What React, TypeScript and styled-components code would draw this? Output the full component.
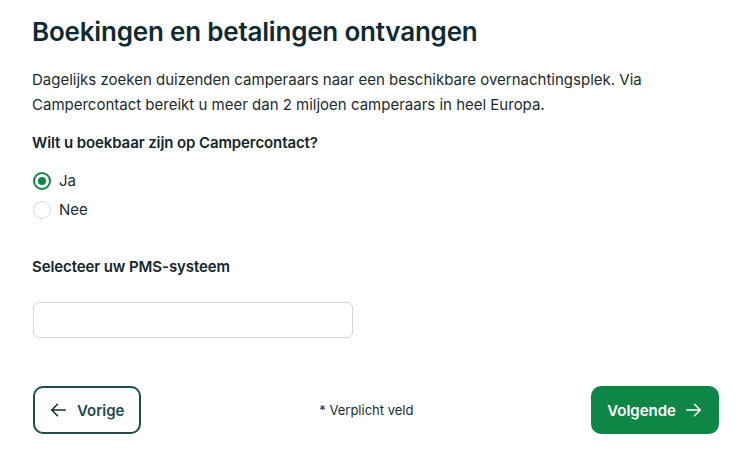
import { FC } from "react";
import styled, { createGlobalStyle } from "styled-components";

const GlobalStyle = createGlobalStyle`
  * { box-sizing: border-box; }
  body {
    margin: 0;
    background: #fff;
    font-family: Inter, "Liberation Sans", sans-serif;
    color: #14262b;
  }
`;

const Page = styled.div`
  width: 742px;
  padding: 14px 23px 0 32px;
`;

const Title = styled.h1`
  font-size: 26px;
  font-weight: 600;
  line-height: 36px;
  margin: 0 0 17px;
  color: #0f2a30;
  letter-spacing: -0.2px;
`;

const Intro = styled.p`
  font-size: 15px;
  line-height: 25px;
  margin: 0 0 16px;
  color: #1a2b2f;
`;

const Question = styled.h3`
  font-size: 15px;
  font-weight: 600;
  line-height: 20px;
  margin: 0 0 19px;
  color: #14262b;
  letter-spacing: -0.1px;
`;

const Options = styled.div`
  display: flex;
  flex-direction: column;
  gap: 11px;
  margin-bottom: 38px;
`;

const Option = styled.label`
  display: flex;
  align-items: center;
  gap: 8px;
  font-size: 15px;
  line-height: 18px;
  color: #1a2b2f;
`;

const Radio = styled.span<{ $checked?: boolean }>`
  width: 18px;
  height: 18px;
  border-radius: 50%;
  border: ${(p) => (p.$checked ? "2px solid #0e8746" : "1px solid #d7dae0")};
  display: flex;
  align-items: center;
  justify-content: center;
  margin-left: 1px;

  &::after {
    content: "";
    width: 8px;
    height: 8px;
    border-radius: 50%;
    background: #0e8746;
    display: ${(p) => (p.$checked ? "block" : "none")};
  }
`;

const FieldLabel = styled.h3`
  font-size: 15px;
  font-weight: 600;
  line-height: 20px;
  margin: 0 0 25px;
  color: #14262b;
  letter-spacing: -0.1px;
`;

const Input = styled.input`
  display: block;
  width: 320px;
  height: 36px;
  border: 1px solid #d3d6dd;
  border-radius: 6px;
  margin: 0 0 1px 1px;
  font-family: inherit;
  font-size: 15px;
  padding: 0 12px;
  outline: none;
`;

const Footer = styled.div`
  display: flex;
  align-items: center;
  justify-content: space-between;
  margin-top: 48px;
`;

const Button = styled.button<{ $primary?: boolean }>`
  display: flex;
  align-items: center;
  gap: ${(p) => (p.$primary ? "10px" : "11px")};
  height: 48px;
  padding: ${(p) => (p.$primary ? "0 16px 0 14px" : "0 15px 0 16px")};
  border-radius: 10px;
  font-family: inherit;
  font-size: 15px;
  font-weight: 600;
  cursor: pointer;
  border: 2px solid ${(p) => (p.$primary ? "#0e8746" : "#1f4a50")};
  background: ${(p) => (p.$primary ? "#0e8746" : "#fff")};
  color: ${(p) => (p.$primary ? "#fff" : "#1f4a50")};
  margin-left: ${(p) => (p.$primary ? "0" : "1px")};

  svg {
    color: ${(p) => (p.$primary ? "#fff" : "#1a2b2f")};
  }
`;

const Required = styled.span`
  font-size: 13px;
  color: #1a2b2f;
`;

const Arrow: FC<{ dir: "left" | "right" }> = ({ dir }) => (
  <svg width="15" height="14" viewBox="0 0 15 14" fill="none" stroke="currentColor" strokeWidth="1.5" strokeLinecap="round" strokeLinejoin="round">
    {dir === "left" ? (
      <>
        <path d="M14.2 7H0.8" />
        <path d="M6.5 1.2L0.8 7l5.7 5.8" />
      </>
    ) : (
      <>
        <path d="M0.8 7h13.4" />
        <path d="M8.5 1.2L14.2 7l-5.7 5.8" />
      </>
    )}
  </svg>
);

const App: FC = () => {
  return (
    <>
      <GlobalStyle />
      <Page>
        <Title>Boekingen en betalingen ontvangen</Title>
        <Intro>
          Dagelijks zoeken duizenden camperaars naar een beschikbare overnachtingsplek. Via
          <br />
          Campercontact bereikt u meer dan 2 miljoen camperaars in heel Europa.
        </Intro>
        <Question>Wilt u boekbaar zijn op Campercontact?</Question>
        <Options>
          <Option>
            <Radio $checked />
            Ja
          </Option>
          <Option>
            <Radio />
            Nee
          </Option>
        </Options>
        <FieldLabel>Selecteer uw PMS-systeem</FieldLabel>
        <Input />
        <Footer>
          <Button>
            <Arrow dir="left" />
            Vorige
          </Button>
          <Required>* Verplicht veld</Required>
          <Button $primary>
            Volgende
            <Arrow dir="right" />
          </Button>
        </Footer>
      </Page>
    </>
  );
};

export default App;
